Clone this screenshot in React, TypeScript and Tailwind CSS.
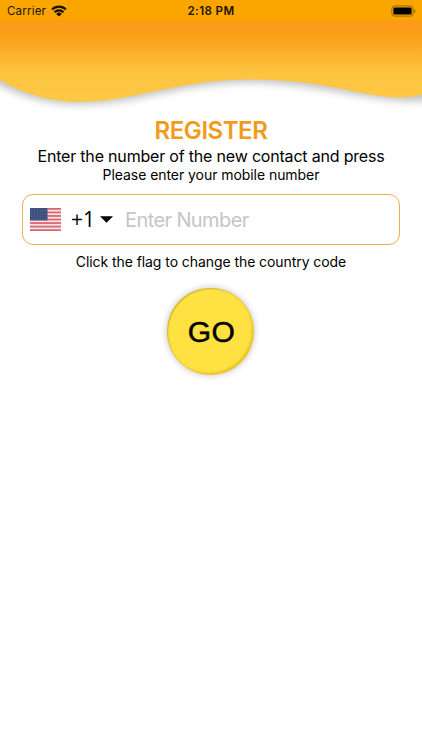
function StatusBar() {
  return (
    <div className="grid h-5 grid-cols-3 items-center bg-[#fba500] text-[11.6px] leading-5 text-[#201500]">
      <div className="flex items-center gap-[5px] pt-[1px] pl-[7px]">
        <span className="tracking-[0.15px]">Carrier</span>
        <svg width="16" height="12" viewBox="0 0 16 12" fill="none" stroke="#171000" strokeWidth="2.1">
          <path d="M1.100 4.500a9.800 9.800 0 0 1 13.800 0M3.500 7.200a6.400 6.400 0 0 1 9 0" />
          <path d="M8 11.600 5.200 8.900a4 4 0 0 1 5.600 0Z" fill="#171000" stroke="none" />
        </svg>
      </div>
      <span className="pt-[1px] text-center font-semibold tracking-[0.4px]">2:18 PM</span>
      <div className="flex justify-end pr-[6px]">
        <svg width="25" height="12" viewBox="0 0 25 12">
          <rect x=".9" y=".9" width="21.2" height="10.2" rx="2.7" fill="none" stroke="#9b6700" />
          <rect x="2.4" y="2.4" width="18.2" height="7.2" rx="1.3" fill="#000" />
          <path d="M23.3 4.2c1.6.4 1.6 3.2 0 3.6Z" fill="#8b5d00" />
        </svg>
      </div>
    </div>
  )
}

function Wave() {
  return (
    <svg className="block" width="422" height="98" viewBox="0 20 422 98">
      <defs>
        <linearGradient id="sun" x1="0" y1="20" x2="0" y2="102" gradientUnits="userSpaceOnUse">
          <stop offset="0" stopColor="#fb9c17" />
          <stop offset=".18" stopColor="#fb9f19" />
          <stop offset=".65" stopColor="#fdc440" />
          <stop offset="1" stopColor="#fdc945" />
        </linearGradient>
        <filter id="shade" x="-10%" y="-10%" width="120%" height="140%">
          <feGaussianBlur stdDeviation="4.5" />
        </filter>
      </defs>
      <path
        d="M-20 20H442V98C390 109 330 83 250 82C180 82 140 104 80 104C40 104 10 92-20 74Z"
        fill="#000"
        opacity=".26"
        filter="url(#shade)"
      />
      <path
        d="M0 20H422V94.500C411 98 398 98.500 380 96C345 91 312 79.500 250 79.500C180 79.500 130 102 80 102C50 102 23 94 0 80Z"
        fill="url(#sun)"
      />
    </svg>
  )
}

function Flag() {
  return (
    <svg width="31" height="23" viewBox="0 0 31 23">
      <rect width="31" height="23" fill="#f6e4e6" />
      {[0, 1, 2, 3, 4, 5, 6].map((i) => (
        <rect key={i} y={i * 3.54} width="31" height="1.77" fill="#d86673" />
      ))}
      <rect width="17.500" height="12.400" fill="#3d4f7c" />
      {[0, 1, 2, 3, 4].map((r) =>
        [0, 1, 2, 3, 4, 5].map((c) => (
          <circle key={`${r}-${c}`} cx={1.7 + c * 2.8} cy={1.4 + r * 2.4} r=".45" fill="#7f8cac" />
        )),
      )}
    </svg>
  )
}

export default function App() {
  return (
    <div className="flex h-[750px] w-[422px] flex-col overflow-hidden bg-white font-['Inter','Liberation_Sans',sans-serif] whitespace-nowrap text-black">
      <StatusBar />
      <Wave />
      <main className="flex flex-col items-center">
        <h1 className="h-[29px] text-[24px] leading-[25px] font-semibold tracking-[-0.45px] text-[#f39a1b]">REGISTER</h1>
        <p className="h-[19px] text-[16px] leading-[19px] tracking-[-0.19px]">Enter the number of the new contact and press</p>
        <p className="h-[28px] text-[14px] leading-[18px] tracking-[-0.06px]">Please enter your mobile number</p>
        <div className="flex h-[51px] w-[378px] items-center rounded-[11px] border-[1.5px] border-[#ebaf4e] pl-[7px]">
          <Flag />
          <span className="ml-[10px] w-[24px] pb-[2px] font-['Open_Sans',sans-serif] text-[21px] leading-[24px]">+1</span>
          <svg className="ml-[5px]" width="13" height="7" viewBox="0 0 13 7">
            <path d="M0 .3h13L6.500 6.700Z" />
          </svg>
          <span className="ml-[12px] text-[20px] leading-[24px] tracking-[-0.6px] text-[#c5c5c7]">Enter Number</span>
        </div>
        <p className="mt-[7px] text-[14px] leading-[20px] tracking-[-0.07px]">Click the flag to change the country code</p>
        <button className="mt-[16px] mr-px flex h-[87px] w-[87px] items-center justify-center rounded-full bg-[#ffe142] pl-[2px] font-['Liberation_Sans',sans-serif] text-[30px] tracking-[0.5px] shadow-[0_0_6px_1px_rgba(0,0,0,0.2),inset_-2px_-2px_2px_rgba(205,155,0,0.4),inset_1px_1px_1px_rgba(145,115,0,0.4)] [-webkit-text-stroke:0.5px_black]">
          GO
        </button>
      </main>
    </div>
  )
}
